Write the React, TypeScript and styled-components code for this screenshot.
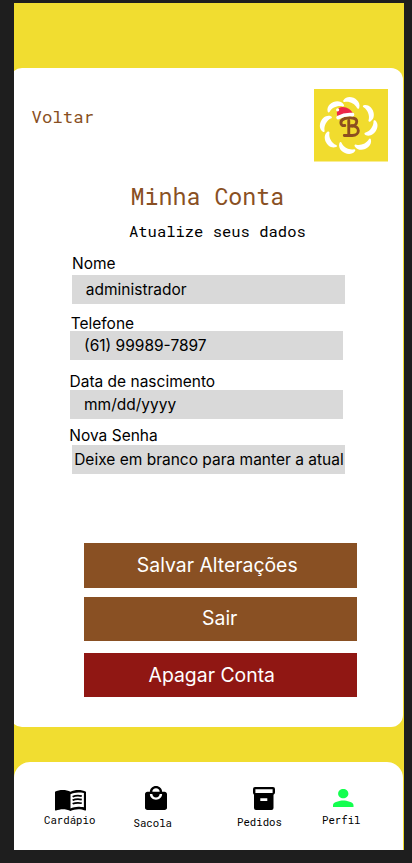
import React from "react";
import styled, { createGlobalStyle } from "styled-components";

const GlobalStyle = createGlobalStyle`
  * { box-sizing: border-box; }
  body { margin: 0; background: #1e1e1e; }
`;

const mono = `"Roboto Mono", "Liberation Mono", monospace`;

const Screen = styled.div`
  height: 863px;
  padding: 3px 8.5px 13px 14px;
  background: #1e1e1e;
  font-family: Inter, sans-serif;
  color: #000;
`;

const Phone = styled.main`
  height: 847px;
  padding: 65px 1px 0 0;
  overflow: hidden;
  display: flex;
  flex-direction: column;
  background: #f1dd30;
`;

const Card = styled.section`
  flex: none;
  height: 659px;
  margin-left: -4px;
  padding-left: 4px;
  border-radius: 12px;
  background: #fff;
`;

const Header = styled.header`
  display: flex;
  justify-content: space-between;
  align-items: flex-start;
  height: 94px;
  padding: 21.4px 14.5px 0 17.5px;
`;

const Back = styled.a`
  margin-top: 16px;
  font: 17.4px/24px ${mono};
  color: #895023;
`;

const Logo = styled.svg`
  display: block;
  width: 74.5px;
  height: 72.5px;
`;

const Title = styled.h1`
  margin: 18px 0 0 116.5px;
  font: 400 23.3px/32px ${mono};
  color: #895023;
`;

const Subtitle = styled.p`
  margin: 9px 0 0 115px;
  font: 15.5px/20px ${mono};
`;

const Form = styled.form`
  height: 302px;
  padding-top: 12px;
`;

const Field = styled.div<{ $height: number; $indent: number }>`
  height: ${(p) => p.$height}px;
  padding-left: ${(p) => p.$indent}px;
`;

const Label = styled.label<{ $height: number; $shift?: number; $line?: number }>`
  display: block;
  height: ${(p) => p.$height}px;
  margin-left: ${(p) => p.$shift ?? 0}px;
  font-size: 15.5px;
  line-height: ${(p) => p.$line ?? 21}px;
`;

const Value = styled.div<{ $pad: number; $line?: number }>`
  width: 273.3px;
  height: 29px;
  padding-left: ${(p) => p.$pad}px;
  background: #d9d9d9;
  font-size: 15.5px;
  line-height: ${(p) => p.$line ?? 30}px;
  white-space: nowrap;
`;

const Actions = styled.div`
  display: grid;
  grid-template-rows: 44.5px 44.5px 47px;
  row-gap: 9px;
  width: 273.5px;
  margin-left: 69.5px;
`;

const Button = styled.button<{ $danger?: boolean; $nudge?: number; $line?: number }>`
  display: block;
  height: 44.5px;
  margin: ${(p) => (p.$danger ? "2.5px 0 0" : "0")};
  padding: 0 ${(p) => p.$nudge ?? 0}px 0 0;
  border: 0;
  background: ${(p) => (p.$danger ? "#901713" : "#895023")};
  color: #fff;
  font: 19.4px/${(p) => p.$line ?? 44}px Inter, sans-serif;

  span {
    display: block;
    height: 44px;
  }
`;

const Nav = styled.nav`
  flex: none;
  display: flex;
  height: 88.5px;
  margin-top: 34.5px;
  padding-left: 30px;
  border-radius: 16px 16px 0 0;
  background: #fff;
`;

const NavItem = styled.a<{ $width: number; $top: number; $iconShift?: number }>`
  flex: none;
  width: ${(p) => p.$width}px;
  padding-top: ${(p) => p.$top}px;
  font: 10.7px/14px ${mono};

  svg {
    display: block;
    margin-left: ${(p) => p.$iconShift ?? 0}px;
  }
`;

const NavLabel = styled.span<{ $gap: number }>`
  display: block;
  margin-top: ${(p) => p.$gap}px;
`;

const petals = [
  [38.5, 13, 25],
  [55.5, 23.5, 68],
  [58.5, 40, 125],
  [50, 56, 157],
  [32.5, 60, 206],
  [16, 51.5, 240],
  [11, 34, 297],
  [21, 17, 337],
];

const BrandLogo = () => (
  <Logo viewBox="0 0 75 72.5" preserveAspectRatio="none" role="img" aria-label="B">
    <rect width="75" height="72.5" fill="#f1dc2e" />
    {petals.map(([x, y, angle]) => (
      <path
        key={angle}
        d="M-8.2 2C-7-6 7-6 8.2 2C8.4 3.6 7.2 4 6.2 3C3 .4-3 .2-6.6 3C-7.6 3.7-8.4 3-8.2 2Z"
        transform={`translate(${x} ${y}) rotate(${angle}) scale(1.07)`}
        fill="#fff"
      />
    ))}
    <g fill="none" stroke="#8c4e20" strokeWidth="2.9" strokeLinecap="round" strokeLinejoin="round">
      <path d="M31 36.5C26 37.5 25.5 31 31 29.5C35 28.5 43 28 43 32.5C43 35.5 40.5 36.8 38 36.8C47 37 46.5 46.5 38.5 46.5H30.5" />
      <path d="M35 31.5V46M35 37H39" />
    </g>
    <path d="M23.5 27C22 22 24 18 28.5 18C34 18 37.5 21 39.5 25Z" fill="#ed2648" />
    <path d="M24.2 28.6Q31 24.8 38.8 25.6" fill="none" stroke="#fff" strokeWidth="3.6" strokeLinecap="round" />
    <circle cx="23.8" cy="20.8" r="1.6" fill="#fff" />
  </Logo>
);

const MenuBookIcon = () => (
  <svg width="31" height="21" viewBox="1 4.5 22 17" preserveAspectRatio="none">
    <path d="M17.5 4.5c-1.95 0-4.05.4-5.5 1.5-1.45-1.1-3.55-1.5-5.5-1.5S2.45 4.9 1 6v14.65c0 .65.73.45.75.45C3.1 20.45 5.05 20 6.5 20c1.95 0 4.05.4 5.5 1.5 1.35-.85 3.8-1.5 5.5-1.5 1.65 0 3.35.3 4.75 1.05.41.21.75-.19.75-.45V6c-1.49-1.12-3.63-1.5-5.5-1.5zm4 14c-1.1-.35-2.8-.5-4-.5-1.7 0-4.15.65-5.5 1.5V8c1.35-.85 3.8-1.5 5.5-1.5 1.2 0 2.9.15 4 .5v11.5z" />
    <path d="M13.5 9.9c1.8-.9 4.5-1 6.5-.5M13.5 12.8c1.8-.9 4.5-1 6.5-.5M13.5 15.7c1.8-.9 4.5-1 6.5-.5" fill="none" stroke="#000" strokeWidth="1.4" />
  </svg>
);

const BagIcon = () => (
  <svg width="22" height="24" viewBox="3 1 18 21" preserveAspectRatio="none">
    <path d="M19 6h-2c0-2.76-2.24-5-5-5S7 3.24 7 6H5c-1.1 0-1.99.9-1.99 2L3 20c0 1.1.9 2 2 2h14c1.1 0 2-.9 2-2V8c0-1.1-.9-2-2-2zm-7-3c1.66 0 3 1.34 3 3H9c0-1.66 1.34-3 3-3zm0 10c-2.76 0-5-2.24-5-5h2c0 1.66 1.34 3 3 3s3-1.34 3-3h2c0 2.76-2.24 5-5 5z" />
  </svg>
);

const BoxIcon = () => (
  <svg width="22" height="23" viewBox="0 0 22 23">
    <path fillRule="evenodd" d="M2 0H20Q22 0 22 2V5.5Q22 7 20.5 7.7V21Q20.5 23 18.5 23H3Q1 23 1 21V7.7Q0 7 0 5.5V2Q0 0 2 0ZM2.4 2.2V6H19.6V2.2ZM7.3 11.3V14H14.3V11.3Z" />
  </svg>
);

const PersonIcon = () => (
  <svg width="20.5" height="18.5" viewBox="4 4 16 16" preserveAspectRatio="none" fill="#14ff4f">
    <path d="M12 12c2.21 0 4-1.79 4-4s-1.79-4-4-4-4 1.79-4 4 1.79 4 4 4zm0 2c-2.67 0-8 1.34-8 4v2h16v-2c0-2.66-5.33-4-8-4z" />
  </svg>
);

export default function App() {
  return (
    <Screen>
      <GlobalStyle />
      <Phone>
        <Card>
          <Header>
            <Back>Voltar</Back>
            <BrandLogo />
          </Header>
          <Title>Minha Conta</Title>
          <Subtitle>Atualize seus dados</Subtitle>
          <Form>
            <Field $height={59.5} $indent={58}>
              <Label $height={21.5}>Nome</Label>
              <Value $pad={13.8}>administrador</Value>
            </Field>
            <Field $height={58} $indent={56.2}>
              <Label $height={18} $shift={0.5}>Telefone</Label>
              <Value $pad={13.8}>(61) 99989-7897</Value>
            </Field>
            <Field $height={55} $indent={56.2}>
              <Label $height={19} $shift={-0.7}>Data de nascimento</Label>
              <Value $pad={13.8}>mm/dd/yyyy</Value>
            </Field>
            <Field $height={48} $indent={58}>
              <Label $height={19} $shift={-2.7} $line={19}>Nova Senha</Label>
              <Value $pad={2.2} $line={29}>Deixe em branco para manter a atual</Value>
            </Field>
          </Form>
          <Actions>
            <Button $nudge={6}><span>Salvar Alterações</span></Button>
            <Button $nudge={1} $line={42}><span>Sair</span></Button>
            <Button $danger $nudge={17}><span>Apagar Conta</span></Button>
          </Actions>
        </Card>
        <Nav>
          <NavItem $width={89.5} $top={28.5} $iconShift={10.7}>
            <MenuBookIcon />
            <NavLabel $gap={2}>Cardápio</NavLabel>
          </NavItem>
          <NavItem $width={103.5} $top={24.5} $iconShift={11.5}>
            <BagIcon />
            <NavLabel $gap={6}>Sacola</NavLabel>
          </NavItem>
          <NavItem $width={85} $top={25.5} $iconShift={15.7}>
            <BoxIcon />
            <NavLabel $gap={5}>Pedidos</NavLabel>
          </NavItem>
          <NavItem $width={50} $top={27} $iconShift={11}>
            <PersonIcon />
            <NavLabel $gap={5.5}>Perfil</NavLabel>
          </NavItem>
        </Nav>
      </Phone>
    </Screen>
  );
}
